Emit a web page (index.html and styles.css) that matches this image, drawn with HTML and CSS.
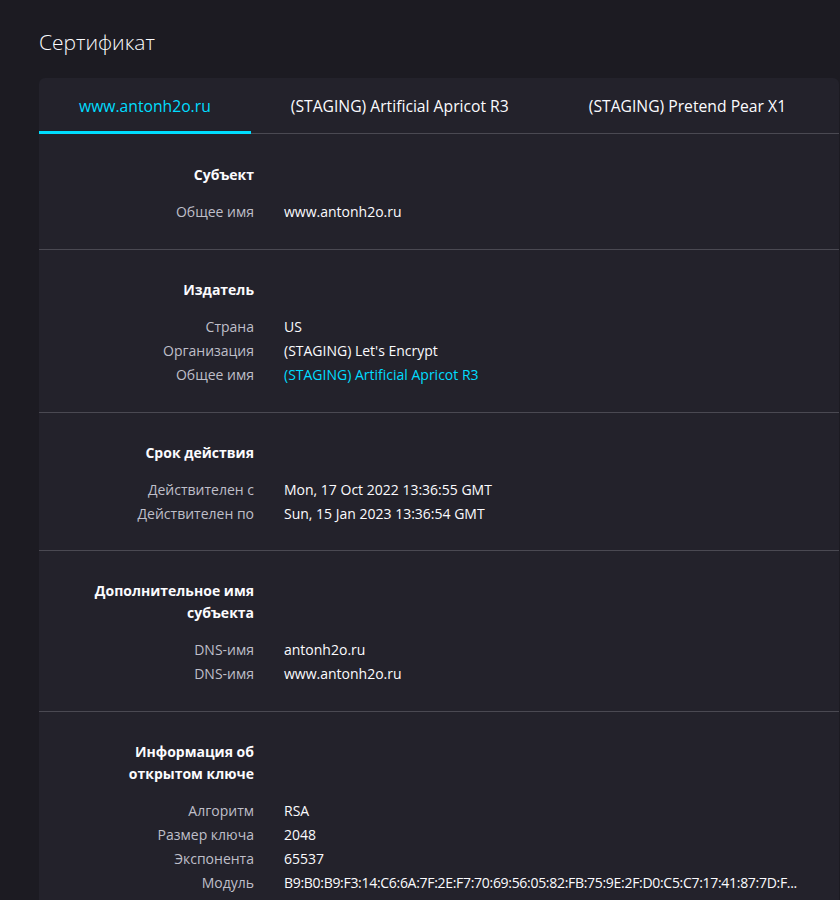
FILE: index.html
```html
<!DOCTYPE html>
<html lang="ru">
<head>
<meta charset="utf-8">
<title>Сертификат</title>
<link rel="stylesheet" href="styles.css">
</head>
<body>
<main class="page">
  <h1 class="title">Сертификат</h1>
  <section class="card">
    <nav class="tabs">
      <div class="tab active">www.antonh2o.ru</div>
      <div class="tab">(STAGING) Artificial Apricot R3</div>
      <div class="tab">(STAGING) Pretend Pear X1</div>
    </nav>

    <div class="group first">
      <div class="heading">Субъект</div>
      <div class="label">Общее имя</div><div class="value">www.antonh2o.ru</div>
    </div>

    <div class="group">
      <div class="heading">Издатель</div>
      <div class="label">Страна</div><div class="value">US</div>
      <div class="label">Организация</div><div class="value">(STAGING) Let's Encrypt</div>
      <div class="label">Общее имя</div><div class="value"><a class="link" href="#">(STAGING) Artificial Apricot R3</a></div>
    </div>

    <div class="group short">
      <div class="heading">Срок действия</div>
      <div class="label">Действителен с</div><div class="value">Mon, 17 Oct 2022 13:36:55 GMT</div>
      <div class="label">Действителен по</div><div class="value">Sun, 15 Jan 2023 13:36:54 GMT</div>
    </div>

    <div class="group">
      <div class="heading">Дополнительное имя субъекта</div>
      <div class="label">DNS-имя</div><div class="value">antonh2o.ru</div>
      <div class="label">DNS-имя</div><div class="value">www.antonh2o.ru</div>
    </div>

    <div class="group">
      <div class="heading">Информация об открытом ключе</div>
      <div class="label">Алгоритм</div><div class="value">RSA</div>
      <div class="label">Размер ключа</div><div class="value">2048</div>
      <div class="label">Экспонента</div><div class="value">65537</div>
      <div class="label">Модуль</div><div class="value modulus">B9:B0:B9:F3:14:C6:6A:7F:2E:F7:70:69:56:05:82:FB:75:9E:2F:D0:C5:C7:17:41:87:7D:F...</div>
    </div>
  </section>
</main>
</body>
</html>
```

FILE: styles.css
```css
html, body {
  margin: 0;
  padding: 0;
  background: #1c1b22;
}

body {
  font-family: "Open Sans", "Noto Sans", sans-serif;
  font-size: 14px;
  color: #fbfbfe;
  overflow: hidden;
}

.page {
  padding: 28px 1px 0 39px;
}

.title {
  margin: 0 0 22px 0;
  font-size: 21px;
  font-weight: 300;
  line-height: 28px;
  color: #fbfbfe;
}

.card {
  background: #23222b;
  border-radius: 6px;
  overflow: hidden;
}

.tabs {
  display: flex;
  border-bottom: 1px solid #4a4952;
}

.tab {
  display: flex;
  align-items: center;
  box-sizing: border-box;
  height: 56px;
  padding: 3px 40px 0;
  margin-bottom: -1px;
  border-bottom: 3px solid transparent;
  font-size: 15.7px;
  white-space: nowrap;
  color: #fbfbfe;
}

.tab.active {
  color: #00ddff;
  border-bottom-color: #00ddff;
}

.group {
  display: grid;
  grid-template-columns: 175px 1fr;
  column-gap: 30px;
  padding: 29px 30px 25px 40px;
  border-bottom: 1px solid #4a4952;
  line-height: 24px;
}

.group.first {
  padding-top: 30px;
}

.group.short {
  padding-bottom: 24px;
}

.heading {
  grid-column: 1;
  text-align: right;
  font-weight: 700;
  line-height: 22px;
  margin-bottom: 14px;
}

.label {
  grid-column: 1;
  text-align: right;
  color: #bfbfc9;
  white-space: nowrap;
}

.value {
  grid-column: 2;
  white-space: nowrap;
  min-width: 0;
}

.modulus {
  letter-spacing: -0.3px;
}

.link {
  color: #00ddff;
  text-decoration: none;
}
```
